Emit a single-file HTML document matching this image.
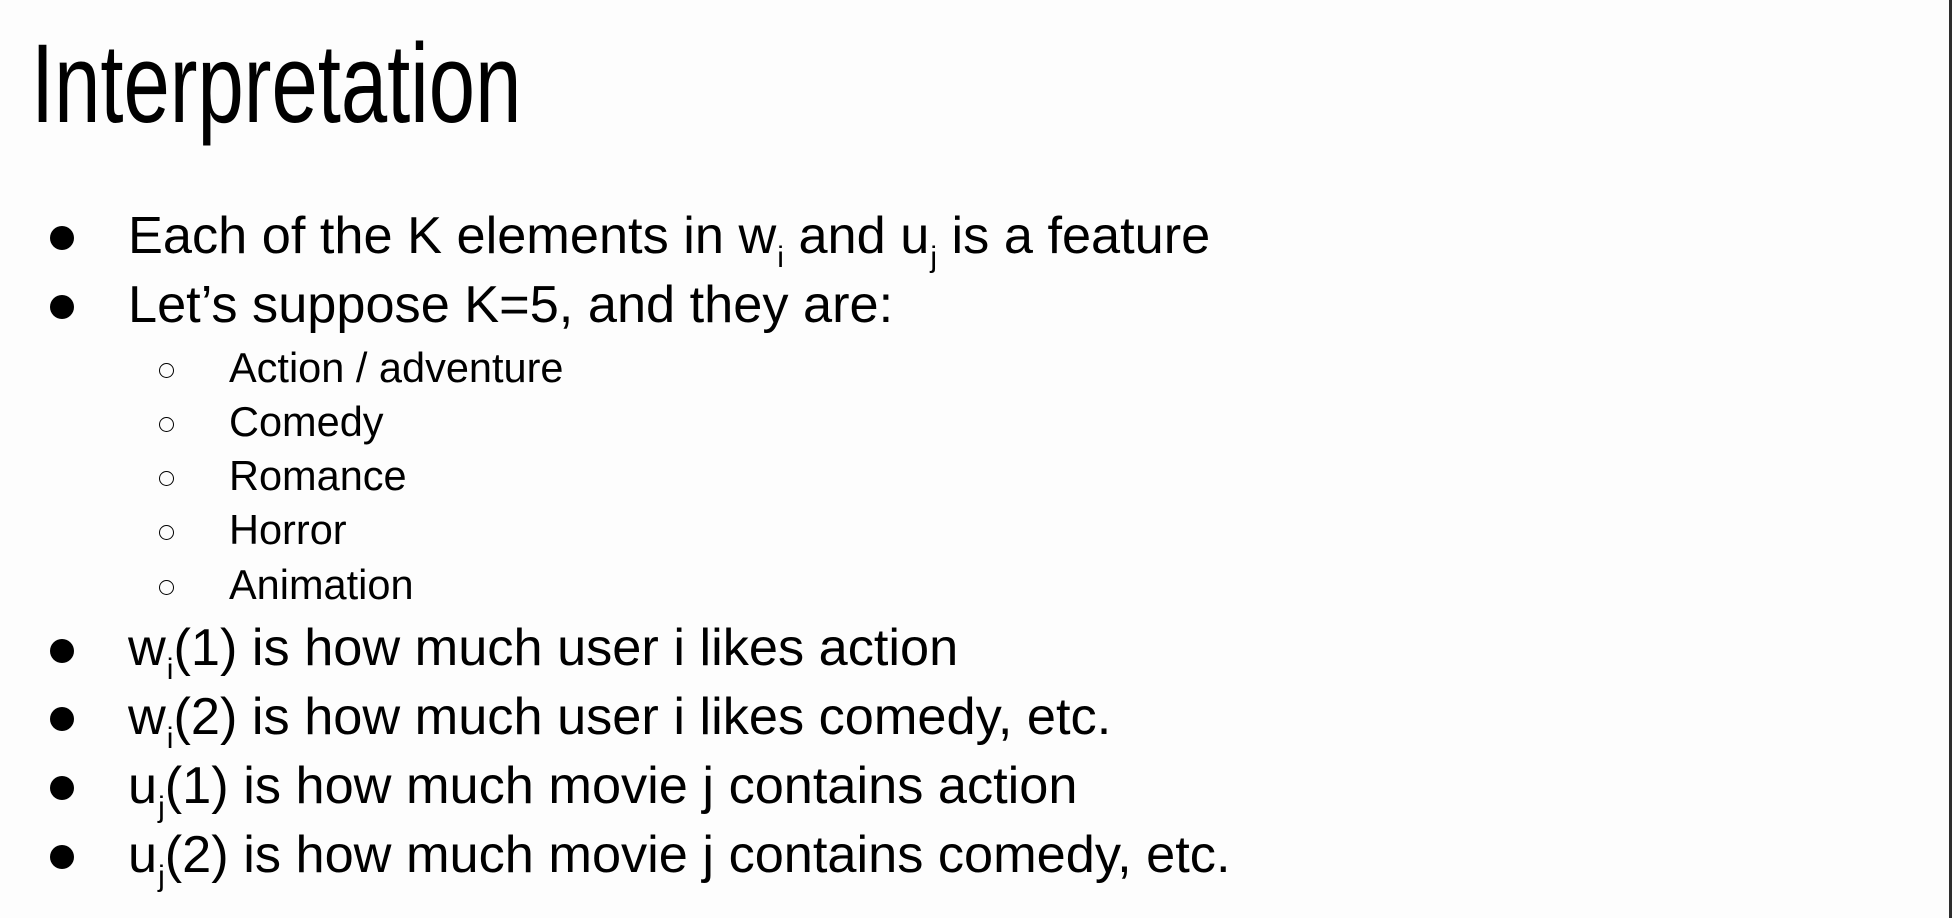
<!DOCTYPE html>
<html><head><meta charset="utf-8"><style>
html,body{margin:0;padding:0;}
body{width:1952px;height:918px;background:#fdfdfd;position:relative;overflow:hidden;font-family:"Liberation Sans",sans-serif;color:#000;}
.rb{position:absolute;right:0;top:0;width:3px;height:918px;background:#2e2e2e;}
.t{position:absolute;left:31px;top:28px;font-size:112px;line-height:1;transform:scaleX(0.743);transform-origin:0 0;white-space:nowrap;}
.l{position:absolute;left:128px;font-size:52.3px;line-height:1;white-space:nowrap;}
.s{position:absolute;left:229px;font-size:41.5px;line-height:1;white-space:nowrap;}
.b{position:absolute;left:50px;width:24px;height:24px;border-radius:50%;background:#000;}
.c{position:absolute;left:159px;width:13px;height:13px;border:1.6px solid #000;border-radius:50%;}
sub{font-size:30px;vertical-align:-14px;line-height:0;margin-left:1px;}
</style></head><body>
<div class="rb"></div>
<div class="t">Interpretation</div>

<div class="b" style="top:226px"></div>
<div class="l" style="top:210px">Each of the K elements in w<sub>i</sub> and u<sub>j</sub> is a feature</div>
<div class="b" style="top:295px"></div>
<div class="l" style="top:279px">Let’s suppose K=5, and they are:</div>

<div class="c" style="top:363px"></div><div class="s" style="top:347px">Action / adventure</div>
<div class="c" style="top:417px"></div><div class="s" style="top:401px">Comedy</div>
<div class="c" style="top:471px"></div><div class="s" style="top:455px">Romance</div>
<div class="c" style="top:525px"></div><div class="s" style="top:509px">Horror</div>
<div class="c" style="top:580px"></div><div class="s" style="top:564px">Animation</div>

<div class="b" style="top:639px"></div>
<div class="l" style="top:622px">w<sub>i</sub>(1) is how much user i likes action</div>
<div class="b" style="top:707px"></div>
<div class="l" style="top:691px">w<sub>i</sub>(2) is how much user i likes comedy, etc.</div>
<div class="b" style="top:776px"></div>
<div class="l" style="top:760px">u<sub>j</sub>(1) is how much movie j contains action</div>
<div class="b" style="top:845px"></div>
<div class="l" style="top:829px">u<sub>j</sub>(2) is how much movie j contains comedy, etc.</div>
</body></html>
